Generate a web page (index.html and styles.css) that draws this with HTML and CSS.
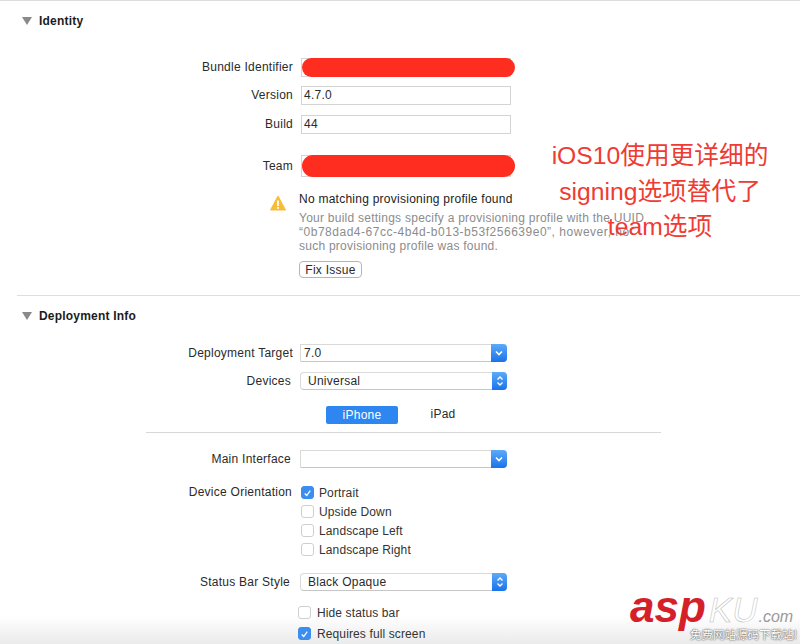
FILE: index.html
```html
<!DOCTYPE html>
<html lang="en">
<head>
    <meta charset="UTF-8">
    <meta name="viewport" content="width=device-width, initial-scale=1.0">
    <title>General</title>
    <link rel="stylesheet" href="styles.css">
</head>
<body>
    <div class="page">
        <div class="bottom-fade"></div>

        <section class="identity">
            <h2 class="section-title"><span class="disclosure"></span>Identity</h2>

            <div class="row bundle-row">
                <span class="label">Bundle Identifier</span>
                <div class="field"><span class="redact"></span></div>
            </div>
            <div class="row version-row">
                <span class="label">Version</span>
                <div class="field">4.7.0</div>
            </div>
            <div class="row build-row">
                <span class="label">Build</span>
                <div class="field">44</div>
            </div>
            <div class="row team-row">
                <span class="label">Team</span>
                <div class="field"><span class="redact"></span></div>
            </div>

            <div class="warning">
                <svg class="warning-icon" width="16" height="16" viewBox="0 0 16 16">
                    <path d="M8 1 L15.5 15 L0.5 15 Z" fill="#f7bd3a" stroke="#f7bd3a" stroke-width="1" stroke-linejoin="round"/>
                    <rect x="7.1" y="5.5" width="1.8" height="5.5" fill="#fff"/>
                    <rect x="7.1" y="12" width="1.8" height="1.8" fill="#fff"/>
                </svg>
                <div class="warning-body">
                    <div class="warning-title">No matching provisioning profile found</div>
                    <p class="warning-text">Your build settings specify a provisioning profile with the UUID<br><span class="uuid-line">“0b78dad4-67cc-4b4d-b013-b53f256639e0”, however, no</span><br>such provisioning profile was found.</p>
                    <button class="fix-button">Fix Issue</button>
                </div>
            </div>
        </section>

        <section class="deployment">
            <h2 class="section-title"><span class="disclosure"></span>Deployment Info</h2>

            <div class="row target-row">
                <span class="label">Deployment Target</span>
                <div class="select combo">7.0
                    <span class="select-cap">
                        <svg width="10" height="10" viewBox="0 0 10 10"><path d="M2 3.5 L5 6.5 L8 3.5" fill="none" stroke="#fff" stroke-width="1.6"/></svg>
                    </span>
                </div>
            </div>
            <div class="row devices-row">
                <span class="label label-short">Devices</span>
                <div class="select popup">Universal
                    <span class="select-cap">
                        <svg width="10" height="14" viewBox="0 0 10 14"><path d="M2.5 5.5 L5 3 L7.5 5.5 M2.5 8.5 L5 11 L7.5 8.5" fill="none" stroke="#fff" stroke-width="1.4"/></svg>
                    </span>
                </div>
            </div>

            <div class="tabs">
                <span class="tab tab-active">iPhone</span>
                <span class="tab">iPad</span>
            </div>
            <div class="tabs-rule"></div>

            <div class="row main-row">
                <span class="label label-short">Main Interface</span>
                <div class="select combo">
                    <span class="select-cap">
                        <svg width="10" height="10" viewBox="0 0 10 10"><path d="M2 3.5 L5 6.5 L8 3.5" fill="none" stroke="#fff" stroke-width="1.6"/></svg>
                    </span>
                </div>
            </div>

            <div class="row orientation-row">
                <span class="label label-orient">Device Orientation</span>
                <div class="checks">
                    <div class="check-row"><span class="check checked"><svg width="12" height="12" viewBox="0 0 12 12"><path d="M3 6.5 L5.2 8.8 L9 3.5" fill="none" stroke="#fff" stroke-width="1.4"/></svg></span>Portrait</div>
                    <div class="check-row"><span class="check"></span>Upside Down</div>
                    <div class="check-row"><span class="check"></span>Landscape Left</div>
                    <div class="check-row"><span class="check"></span>Landscape Right</div>
                </div>
            </div>

            <div class="row status-row">
                <span class="label label-status">Status Bar Style</span>
                <div class="select popup">Black Opaque
                    <span class="select-cap">
                        <svg width="10" height="14" viewBox="0 0 10 14"><path d="M2.5 5.5 L5 3 L7.5 5.5 M2.5 8.5 L5 11 L7.5 8.5" fill="none" stroke="#fff" stroke-width="1.4"/></svg>
                    </span>
                </div>
            </div>

            <div class="checks status-checks">
                <div class="check-row"><span class="check"></span>Hide status bar</div>
                <div class="check-row"><span class="check checked"><svg width="12" height="12" viewBox="0 0 12 12"><path d="M3 6.5 L5.2 8.8 L9 3.5" fill="none" stroke="#fff" stroke-width="1.4"/></svg></span>Requires full screen</div>
            </div>
        </section>

        <div class="note">iOS10使用更详细的<br>signing选项替代了<br>team选项</div>

        <div class="watermark">
            <div class="watermark-top">
                <span class="wm-asp">asp</span><span class="wm-ku">KU</span><span class="wm-com">.com</span>
            </div>
            <div class="wm-tag">免费网站源码下载站!</div>
        </div>
    </div>
</body>
</html>
```

FILE: styles.css
```css
* {
    box-sizing: border-box;
}
body {
    margin: 0;
    background: #fff;
    font-family: "Liberation Sans", Arial, sans-serif;
    font-size: 12px;
    letter-spacing: 0.25px;
    color: #2a2a2a;
}
.page {
    position: relative;
    width: 800px;
    height: 644px;
    overflow: hidden;
    border-top: 1px solid #dcdcdc;
}

.identity {
    position: relative;
    margin-left: 17px;
    padding-top: 13px;
    padding-bottom: 17px;
    border-bottom: 1px solid #dedede;
}
.section-title {
    display: flex;
    align-items: center;
    height: 14px;
    margin: 0;
    font-size: 12px;
    font-weight: bold;
    letter-spacing: 0.2px;
    color: #1c1c1c;
}
.disclosure {
    width: 0;
    height: 0;
    margin-left: 5px;
    margin-right: 7px;
    border-left: 5px solid transparent;
    border-right: 5px solid transparent;
    border-top: 8px solid #8a8a8a;
}

.row {
    display: flex;
    align-items: center;
    height: 20px;
}
.label {
    flex: none;
    width: 276px;
    margin-right: 8px;
    text-align: right;
}
.label-short {
    width: 274px;
    margin-right: 10px;
}
.label-orient {
    width: 275px;
    margin-right: 9px;
}
.label-status {
    width: 273px;
    margin-right: 11px;
}

.field {
    position: relative;
    width: 210px;
    height: 19px;
    padding-left: 2px;
    line-height: 17px;
    border: 1px solid #d4d4d4;
    background: #fff;
}
.redact {
    position: absolute;
    left: 0;
    top: -1px;
    width: 213px;
    height: 19px;
    border-radius: 10px;
    background: #ff2d1f;
}
.bundle-row {
    margin-top: 29px;
}
.version-row {
    margin-top: 8px;
}
.build-row {
    margin-top: 9px;
}
.team-row {
    margin-top: 21px;
    height: 22px;
}
.team-row .field {
    height: 22px;
}
.team-row .redact {
    height: 22px;
    border-radius: 11px;
}

.warning {
    display: flex;
    margin-top: 15px;
    margin-left: 253px;
}
.warning-icon {
    flex: none;
    margin-top: 3px;
    margin-right: 13px;
}
.warning-title {
    height: 14px;
    line-height: 14px;
    color: #1c1c1c;
}
.warning-text {
    margin: 5px 0 0;
    line-height: 14px;
    color: #8c8c8c;
}
.uuid-line {
    letter-spacing: 0.52px;
}
.fix-button {
    display: block;
    width: 63px;
    height: 17px;
    margin-top: 8px;
    padding: 0;
    font: inherit;
    letter-spacing: inherit;
    line-height: 14px;
    color: #2a2a2a;
    background: #fff;
    border: 1px solid #b5b5b5;
    border-radius: 4px;
}

.deployment {
    position: relative;
    margin-left: 17px;
    padding-top: 13px;
}
.select {
    display: flex;
    align-items: center;
    width: 207px;
    height: 18px;
    margin-left: -1px;
    background: #fff;
    border: 1px solid #d9d9d9;
    border-bottom-color: #c6c6c6;
    border-right: none;
    white-space: nowrap;
}
.combo {
    padding-left: 3px;
    border-radius: 1px 4px 4px 1px;
}
.popup {
    padding-left: 7px;
    border-radius: 4px;
}
.select-cap {
    display: flex;
    align-items: center;
    justify-content: center;
    width: 16px;
    height: 18px;
    margin-top: -1px;
    margin-bottom: -1px;
    margin-left: auto;
    background: linear-gradient(#5cabf8, #1a72ea);
    border-radius: 0 4px 4px 0;
}
.popup .select-cap {
    width: 15px;
}
.target-row {
    margin-top: 20px;
}
.devices-row {
    margin-top: 8px;
}
.tabs {
    display: flex;
    align-items: center;
    height: 18px;
    margin-top: 15px;
    margin-left: 309px;
}
.tab {
    width: 72px;
    height: 18px;
    margin-right: 9px;
    line-height: 17px;
    text-align: center;
    color: #2a2a2a;
}
.tab-active {
    color: #fff;
    background: #2e86f1;
    border-radius: 2px;
    line-height: 19px;
}
.tabs-rule {
    width: 515px;
    height: 1px;
    margin-top: 8px;
    margin-left: 129px;
    background: #d8d8d8;
}
.main-row {
    margin-top: 16px;
}
.orientation-row {
    align-items: flex-start;
    height: auto;
    margin-top: 14px;
}
.orientation-row .label {
    line-height: 19px;
}
.checks {
    display: flex;
    flex-direction: column;
}
.check-row {
    display: flex;
    align-items: center;
    height: 19px;
    letter-spacing: 0.12px;
    color: #333;
}
.check {
    display: flex;
    align-items: center;
    justify-content: center;
    width: 13px;
    height: 13px;
    margin-right: 5px;
    background: #fff;
    border: 1px solid #cfcfcf;
    border-radius: 3px;
}
.check.checked {
    background: #3b8df0;
    border-color: #3b8df0;
}
.status-row {
    margin-top: 13px;
}
.status-checks {
    margin-top: 11px;
    margin-left: 281px;
    row-gap: 2px;
}
.status-checks .check {
    margin-right: 6px;
}

.note {
    position: absolute;
    left: 540px;
    top: 137px;
    width: 240px;
    font-family: "Liberation Sans", "Noto Sans CJK SC", sans-serif;
    font-size: 24.7px;
    line-height: 35.5px;
    letter-spacing: 0;
    text-align: center;
    color: #ef3b33;
}

.bottom-fade {
    position: absolute;
    left: 0;
    right: 0;
    bottom: 0;
    height: 28px;
    background: linear-gradient(rgba(235, 235, 235, 0), rgba(232, 232, 232, 0.9));
}
.watermark {
    position: absolute;
    left: 630px;
    top: 587px;
    width: 170px;
}
.watermark-top {
    display: flex;
    align-items: baseline;
    height: 38px;
    line-height: 38px;
    letter-spacing: 0;
}
.wm-asp {
    font-size: 44px;
    font-weight: bold;
    font-style: italic;
    color: #d5202a;
}
.wm-ku {
    margin-left: 3px;
    font-size: 35px;
    font-style: italic;
    color: #fff;
    -webkit-text-stroke: 0.5px #b8b8b8;
}
.wm-com {
    margin-left: 1px;
    font-size: 16px;
    font-style: italic;
    color: #9a9a9a;
}
.wm-tag {
    margin-top: 2px;
    margin-left: 60px;
    font-family: "Noto Sans CJK SC", sans-serif;
    font-size: 11.5px;
    line-height: 13px;
    letter-spacing: 0;
    white-space: nowrap;
    color: #fff;
    text-shadow: 0 0 2px #555, 0 0 1px #555;
}
```
